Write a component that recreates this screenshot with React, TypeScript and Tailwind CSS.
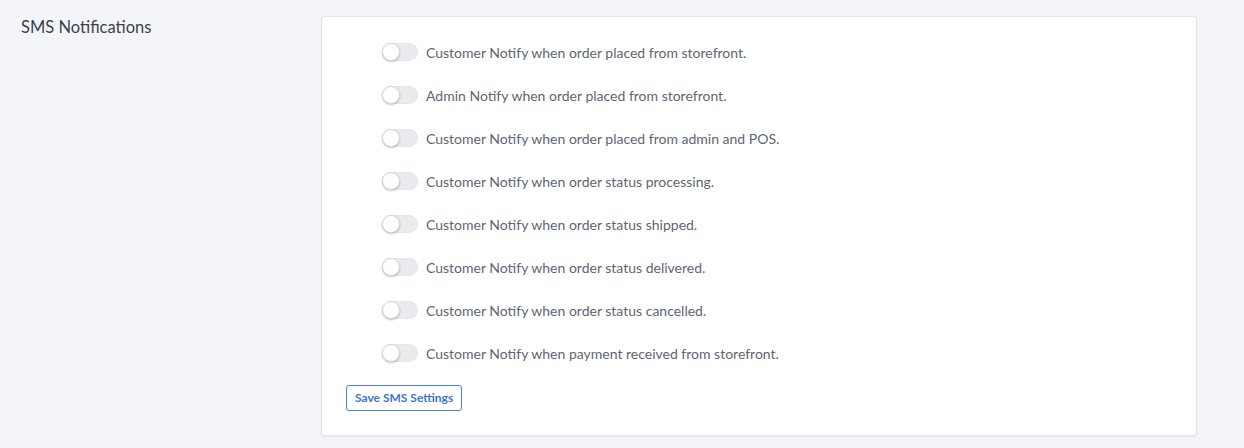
import { useState } from 'react'

const options = [
  'Customer Notify when order placed from storefront.',
  'Admin Notify when order placed from storefront.',
  'Customer Notify when order placed from admin and POS.',
  'Customer Notify when order status processing.',
  'Customer Notify when order status shipped.',
  'Customer Notify when order status delivered.',
  'Customer Notify when order status cancelled.',
  'Customer Notify when payment received from storefront.',
]

function Toggle({ on, onChange }: { on: boolean; onChange: () => void }) {
  return (
    <button
      onClick={onChange}
      className={`relative h-[18px] w-[36px] shrink-0 rounded-full border border-[#e3e6eb] ${on ? 'bg-[#3d7ad6]' : 'bg-[#e9ebef]'}`}
    >
      <span
        className={`absolute top-[-1px] h-[18px] w-[18px] rounded-full border border-[#d5d9df] bg-white shadow-[0_1px_2px_rgba(0,0,0,0.25)] ${on ? 'left-[16px]' : 'left-[-1px]'}`}
      />
    </button>
  )
}

export default function App() {
  const [checked, setChecked] = useState<boolean[]>(options.map(() => false))

  return (
    <div className="min-h-[448px] bg-[#f4f5f9] font-['Source_Sans_Pro','Lato',sans-serif]">
      <div className="flex pt-4">
        <div className="w-[321px] pl-[21px] text-[16.5px] leading-[22px] text-[#3b424d]">SMS Notifications</div>
        <div className="w-[876px] rounded-[3px] border border-[#e1e5ec] bg-white pb-[24px] pl-[24px] pt-[26px] shadow-[0_1px_2px_rgba(0,0,0,0.06)]">
          <div className="flex flex-col gap-[25px] pl-[36px]">
            {options.map((label, i) => (
              <label key={i} className="flex h-[18px] items-center gap-2">
                <Toggle
                  on={checked[i]}
                  onChange={() => setChecked(c => c.map((v, j) => (j === i ? !v : v)))}
                />
                <span className="text-[14px] text-[#5d6673]">{label}</span>
              </label>
            ))}
          </div>
          <button className="mt-[23px] h-[26px] rounded-[3px] border border-[#4a80d9] px-[8px] text-[12px] font-bold text-[#3d74cf]">
            Save SMS Settings
          </button>
        </div>
      </div>
    </div>
  )
}
